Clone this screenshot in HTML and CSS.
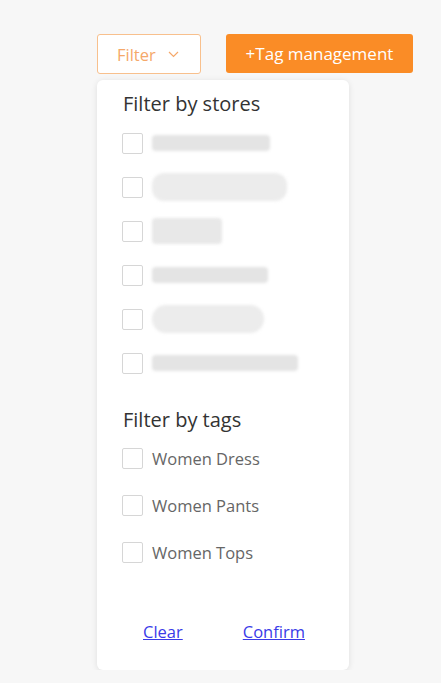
FILE: index.html
```html
<!DOCTYPE html>
<html lang="en">
<head>
    <meta charset="UTF-8">
    <title>Filter</title>
    <link rel="stylesheet" href="styles.css">
</head>
<body>
    <div class="toolbar">
        <button type="button" class="btn-filter">Filter
            <svg class="chev" width="11" height="7" viewBox="0 0 11 7"><path d="M1 1l4.5 4.5L10 1" fill="none" stroke="#f5a86a" stroke-width="1.2"/></svg>
        </button>
        <button type="button" class="btn-tag">+Tag management</button>
    </div>

    <div class="panel">
        <h3>Filter by stores</h3>
        <div class="store-row"><span class="box"></span><span class="blur" style="width:118px"></span></div>
        <div class="store-row"><span class="box"></span><span class="blur tall" style="width:135px"></span></div>
        <div class="store-row"><span class="box"></span><span class="blur mid" style="width:70px"></span></div>
        <div class="store-row"><span class="box"></span><span class="blur" style="width:116px"></span></div>
        <div class="store-row"><span class="box"></span><span class="blur tall round" style="width:112px"></span></div>
        <div class="store-row"><span class="box"></span><span class="blur" style="width:146px"></span></div>

        <h3 class="tags-title">Filter by tags</h3>
        <label class="tag-row"><span class="box"></span>Women Dress</label>
        <label class="tag-row"><span class="box"></span>Women Pants</label>
        <label class="tag-row"><span class="box"></span>Women Tops</label>

        <div class="actions">
            <a href="#">Clear</a>
            <a href="#">Confirm</a>
        </div>
    </div>
</body>
</html>
```

FILE: styles.css
```css
body {
    margin: 0;
    background-color: #f7f7f7;
    font-family: "Open Sans", "Noto Sans", sans-serif;
}
.toolbar {
    display: flex;
    padding: 34px 0 0 97px;
}
.btn-filter {
    width: 104px;
    height: 40px;
    background: #fff;
    border: 1px solid #f8c08d;
    border-radius: 3px;
    color: #f5a86a;
    font-family: inherit;
    font-size: 16.5px;
    display: flex;
    align-items: center;
    padding: 0 0 0 19px;
    gap: 12px;
}
.btn-tag {
    margin-left: 25px;
    width: 187px;
    height: 39px;
    background: #fa8c26;
    border: none;
    border-radius: 3px;
    color: #fff;
    font-family: inherit;
    font-size: 17px;
}
.panel {
    margin: 6px 0 0 97px;
    width: 252px;
    background: #fff;
    border-radius: 6px;
    box-shadow: 0 1px 6px rgba(0,0,0,0.1);
    padding: 11px 0 27px 26px;
    box-sizing: border-box;
}
h3 {
    margin: 0 0 4px;
    font-size: 20px;
    line-height: 26px;
    font-weight: normal;
    color: #333;
}
.tags-title {
    margin-top: 22px;
    margin-bottom: 2px;
}
.store-row, .tag-row {
    display: flex;
    align-items: center;
    height: 44px;
}
.tag-row {
    height: 47px;
    font-size: 16.5px;
    color: #666;
}
.box {
    width: 19px;
    height: 19px;
    border: 1px solid #d6d6d6;
    border-radius: 2px;
    margin: 0 9px 0 -1px;
    flex-shrink: 0;
}
.blur {
    height: 16px;
    background: #e4e4e4;
    border-radius: 4px;
    filter: blur(1.5px);
}
.blur.tall {
    height: 28px;
    background: #ececec;
    border-radius: 12px;
}
.blur.mid {
    height: 26px;
    background: #e8e8e8;
}
.blur.round {
    border-radius: 16px;
}
.actions {
    display: flex;
    gap: 60px;
    margin-top: 45px;
    padding-left: 20px;
    font-size: 16.5px;
    line-height: 22px;
}
.actions a {
    color: #3a3ae8;
}
```
